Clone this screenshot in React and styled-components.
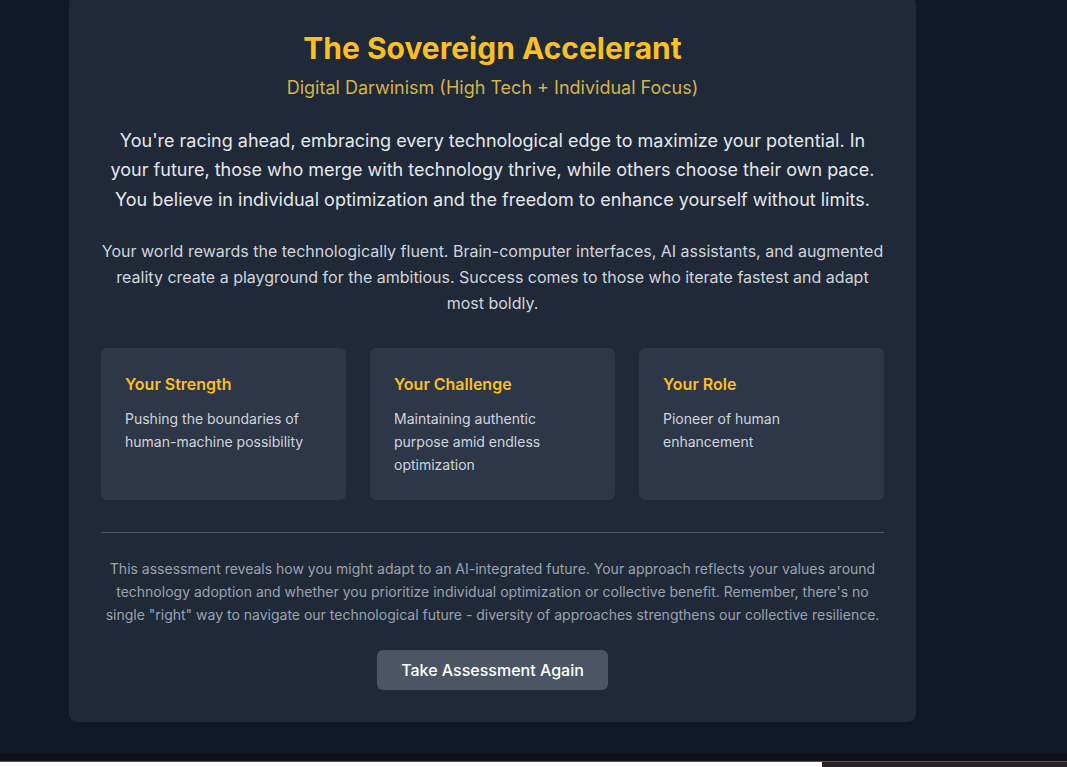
import React from "react";
import styled, { createGlobalStyle } from "styled-components";

const Global = createGlobalStyle`
  html, body { margin: 0; padding: 0; }
  body {
    background: #111827;
    font-family: Inter, "Noto Sans", sans-serif;
    overflow: hidden;
  }
  * { box-sizing: border-box; }
`;

const Page = styled.div`
  height: 767px;
  display: flex;
  flex-direction: column;
  background: #111827;
`;

const Main = styled.main`
  flex: 1;
  padding-left: 69px;
`;

const Card = styled.section`
  width: 847px;
  margin-top: -4px;
  background: #1f2937;
  border-radius: 8px;
  padding: 34px 32px 32px;
  text-align: center;
`;

const Title = styled.h1`
  margin: 0 0 8px;
  font-size: 30px;
  line-height: 36px;
  font-weight: 700;
  color: #fbbf24;
`;

const Subtitle = styled.p`
  margin: 0 0 24px;
  font-size: 18px;
  line-height: 28px;
  color: #d4b34e;
`;

const Lead = styled.p`
  margin: 0 auto 24px;
  max-width: 784px;
  font-size: 18px;
  line-height: 29.25px;
  color: #e5e7eb;
`;

const Body = styled.p`
  margin: 0 0 32px;
  font-size: 16px;
  line-height: 26px;
  color: #d1d5db;
`;

const Grid = styled.div`
  display: grid;
  grid-template-columns: repeat(3, 1fr);
  gap: 24px;
  text-align: left;
`;

const Box = styled.div`
  background: #2d3748;
  border-radius: 6px;
  padding: 24px;
  min-height: 152px;
`;

const BoxTitle = styled.h3`
  margin: 0 0 11px;
  font-size: 16px;
  line-height: 24px;
  font-weight: 600;
  color: #fbbf24;
`;

const BoxText = styled.p`
  margin: 0;
  font-size: 14px;
  line-height: 23px;
  color: #d1d5db;
`;

const Footer = styled.div`
  margin-top: 32px;
  border-top: 1px solid #4b5563;
  padding-top: 24px;
`;

const Note = styled.p`
  margin: 0 0 24px;
  font-size: 14px;
  line-height: 23px;
  color: #9ca3af;
`;

const Button = styled.button`
  width: 231px;
  height: 40px;
  border: none;
  border-radius: 6px;
  background: #4b5563;
  color: #ffffff;
  font-family: inherit;
  font-size: 16px;
  font-weight: 500;
  cursor: pointer;
`;

const BottomBar = styled.div`
  height: 8px;
  background: #121118;
`;

const ScrollTrack = styled.div`
  height: 6px;
  border-top: 1px solid #55555c;
  display: flex;
`;

const Thumb = styled.div`
  width: ${(p) => p.$w}px;
  background: ${(p) => p.$c};
`;

const items = [
  { t: "Your Strength", d: "Pushing the boundaries of human-machine possibility" },
  { t: "Your Challenge", d: "Maintaining authentic purpose amid endless optimization" },
  { t: "Your Role", d: "Pioneer of human enhancement" },
];

export default function App() {
  return (
    <>
      <Global />
      <Page>
        <Main>
          <Card>
            <Title>The Sovereign Accelerant</Title>
            <Subtitle>Digital Darwinism (High Tech + Individual Focus)</Subtitle>
            <Lead>
              You're racing ahead, embracing every technological edge to maximize your potential. In
              your future, those who merge with technology thrive, while others choose their own pace.
              You believe in individual optimization and the freedom to enhance yourself without limits.
            </Lead>
            <Body>
              Your world rewards the technologically fluent. Brain-computer interfaces, AI assistants, and augmented
              reality create a playground for the ambitious. Success comes to those who iterate fastest and adapt
              most boldly.
            </Body>
            <Grid>
              {items.map((it) => (
                <Box key={it.t}>
                  <BoxTitle>{it.t}</BoxTitle>
                  <BoxText>{it.d}</BoxText>
                </Box>
              ))}
            </Grid>
            <Footer>
              <Note>
                This assessment reveals how you might adapt to an AI-integrated future. Your approach reflects your values around
                technology adoption and whether you prioritize individual optimization or collective benefit. Remember, there's no
                single "right" way to navigate our technological future - diversity of approaches strengthens our collective resilience.
              </Note>
              <Button>Take Assessment Again</Button>
            </Footer>
          </Card>
        </Main>
        <BottomBar />
        <ScrollTrack>
          <Thumb $w={822} $c="#ffffff" />
          <Thumb $w={245} $c="#262626" />
        </ScrollTrack>
      </Page>
    </>
  );
}
